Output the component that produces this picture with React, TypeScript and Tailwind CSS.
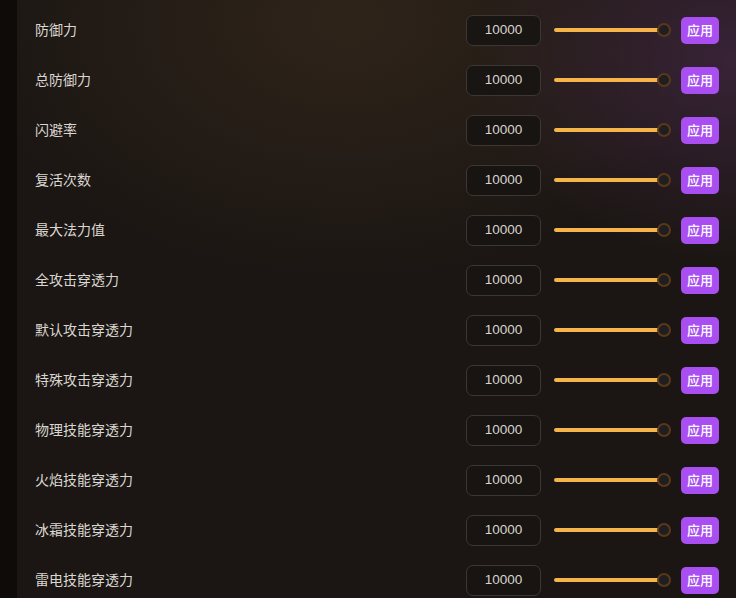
import React from "react";

const labels = [
  "防御力",
  "总防御力",
  "闪避率",
  "复活次数",
  "最大法力值",
  "全攻击穿透力",
  "默认攻击穿透力",
  "特殊攻击穿透力",
  "物理技能穿透力",
  "火焰技能穿透力",
  "冰霜技能穿透力",
  "雷电技能穿透力",
];

function Row({ label }: { label: string }) {
  return (
    <div className="flex items-center h-[50px] pl-[18px] pr-[17px]">
      <div className="flex-1 pb-[2px] text-[14px] text-[#dad6d2]">{label}</div>
      <div className="w-[75px] h-[31px] pt-px rounded-[7px] border border-[#3c3734] bg-[#171412]/90 flex items-center justify-center text-[13.5px] text-[#d8d4cf] font-['Liberation_Sans',sans-serif]">
        10000
      </div>
      <div className="ml-[13px] w-[117px] h-[14px] relative flex items-center">
        <div className="h-[4px] w-[106px] rounded-full bg-[#f5b54b]" />
        <div className="absolute right-0 top-0 w-[14px] h-[14px] rounded-full border-2 border-[#5a3819] bg-[#1f1e20]" />
      </div>
      <button className="ml-[10px] w-[38px] h-[27px] rounded-[5px] bg-[#a94ff2] text-white text-[13px] font-medium flex items-center justify-center">
        应用
      </button>
    </div>
  );
}

export default function App() {
  return (
    <div className="w-[736px] h-[598px] overflow-hidden flex bg-[#1b1613] font-['Noto_Sans_CJK_SC','Noto_Sans',sans-serif]">
      <div className="w-[17px] shrink-0 bg-[#0e0b09]" />
      <div className="flex-1 relative bg-[radial-gradient(ellipse_260px_200px_at_720px_60px,rgba(80,45,85,0.55),transparent),radial-gradient(ellipse_380px_260px_at_330px_20px,rgba(60,45,30,0.6),transparent)]">
        <div className="pt-[5px]">
          {labels.map((l) => (
            <Row key={l} label={l} />
          ))}
        </div>
      </div>
    </div>
  );
}
